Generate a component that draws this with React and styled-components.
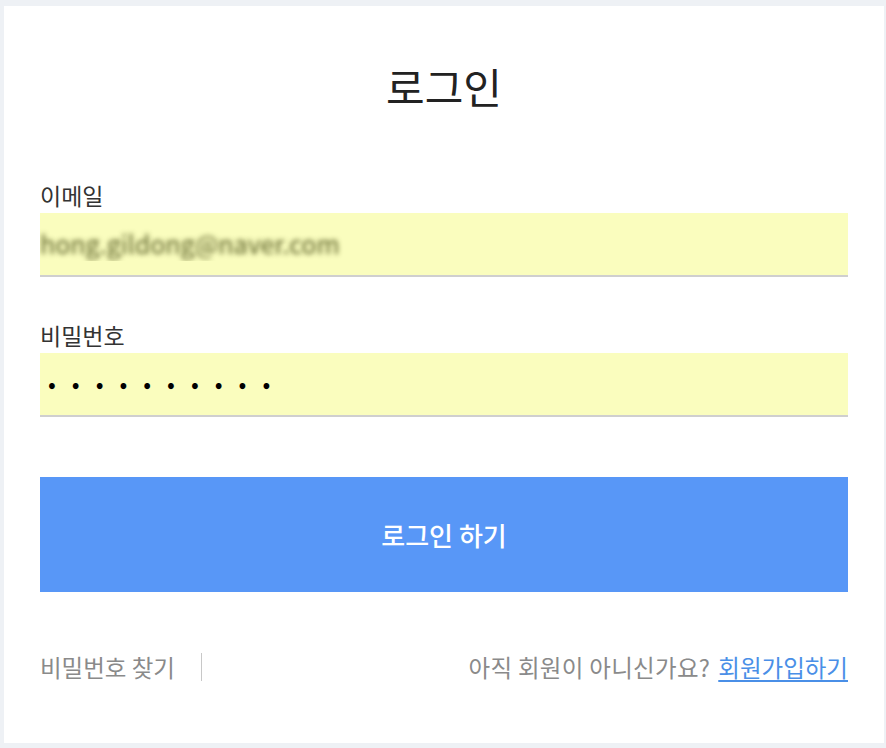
import React from 'react';
import styled, { createGlobalStyle } from 'styled-components';

const GlobalStyle = createGlobalStyle`
  html, body {
    margin: 0;
    padding: 0;
    background: #eef1f5;
  }
  body {
    font-family: "Noto Sans CJK KR", "Noto Sans", sans-serif;
  }
`;

const Page = styled.div`
  padding: 6px 2px 4px 4px;
`;

const Card = styled.div`
  background: #fff;
  padding: 57px 36px 62px;
  display: flex;
  flex-direction: column;
`;

const Title = styled.h1`
  margin: 0 0 72px;
  font-size: 42px;
  line-height: 46px;
  font-weight: 400;
  color: #222;
  text-align: center;
`;

const Field = styled.div`
  display: flex;
  flex-direction: column;
  margin-bottom: ${({ gap }) => gap}px;
`;

const Label = styled.label`
  font-size: 23px;
  line-height: 28px;
  color: #333;
  margin-bottom: 4px;
`;

const Input = styled.input`
  box-sizing: border-box;
  height: 64px;
  width: 100%;
  border: none;
  border-bottom: 2px solid #cfcfcf;
  background: #fafdbe;
  padding: 0 0 2px 0;
  outline: none;
  font-family: "Noto Sans CJK KR", "Noto Sans", sans-serif;
  font-size: ${({ blurred }) => (blurred ? 25 : 23)}px;
  color: ${({ blurred }) => (blurred ? 'transparent' : '#000')};
  text-shadow: ${({ blurred }) => (blurred ? '0 0 5px rgba(70, 75, 20, 0.9)' : 'none')};
  letter-spacing: ${({ spacing }) => spacing || 0}px;
  padding-left: ${({ indent }) => indent || 0}px;
`;

const Button = styled.button`
  height: 115px;
  border: none;
  background: #5897f7;
  color: #fff;
  font-family: "Noto Sans CJK KR", "Noto Sans", sans-serif;
  font-size: 26px;
  font-weight: 500;
  cursor: pointer;
  margin-bottom: 61px;
`;

const Footer = styled.div`
  display: flex;
  justify-content: space-between;
  align-items: center;
  font-size: 23.5px;
  line-height: 28px;
  color: #8a8a8a;
`;

const FindLink = styled.span`
  padding-right: 26px;
  border-right: 1px solid #c8c8c8;
`;

const SignUp = styled.a`
  color: #4a8fe7;
  text-decoration: underline;
  text-underline-offset: 3px;
  margin-left: 8px;
`;

const Question = styled.span`
  letter-spacing: 0.3px;
`;

export default function App() {
  return (
    <Page>
      <GlobalStyle />
      <Card>
        <Title>로그인</Title>
        <Field gap={44}>
          <Label>이메일</Label>
          <Input type="text" readOnly blurred value="hong.gildong@naver.com" />
        </Field>
        <Field gap={60}>
          <Label>비밀번호</Label>
          <Input type="password" readOnly value="1234567890" spacing={16} indent={8} />
        </Field>
        <Button>로그인 하기</Button>
        <Footer>
          <FindLink>비밀번호 찾기</FindLink>
          <span>
            <Question>아직 회원이 아니신가요?</Question>
            <SignUp href="#">회원가입하기</SignUp>
          </span>
        </Footer>
      </Card>
    </Page>
  );
}
